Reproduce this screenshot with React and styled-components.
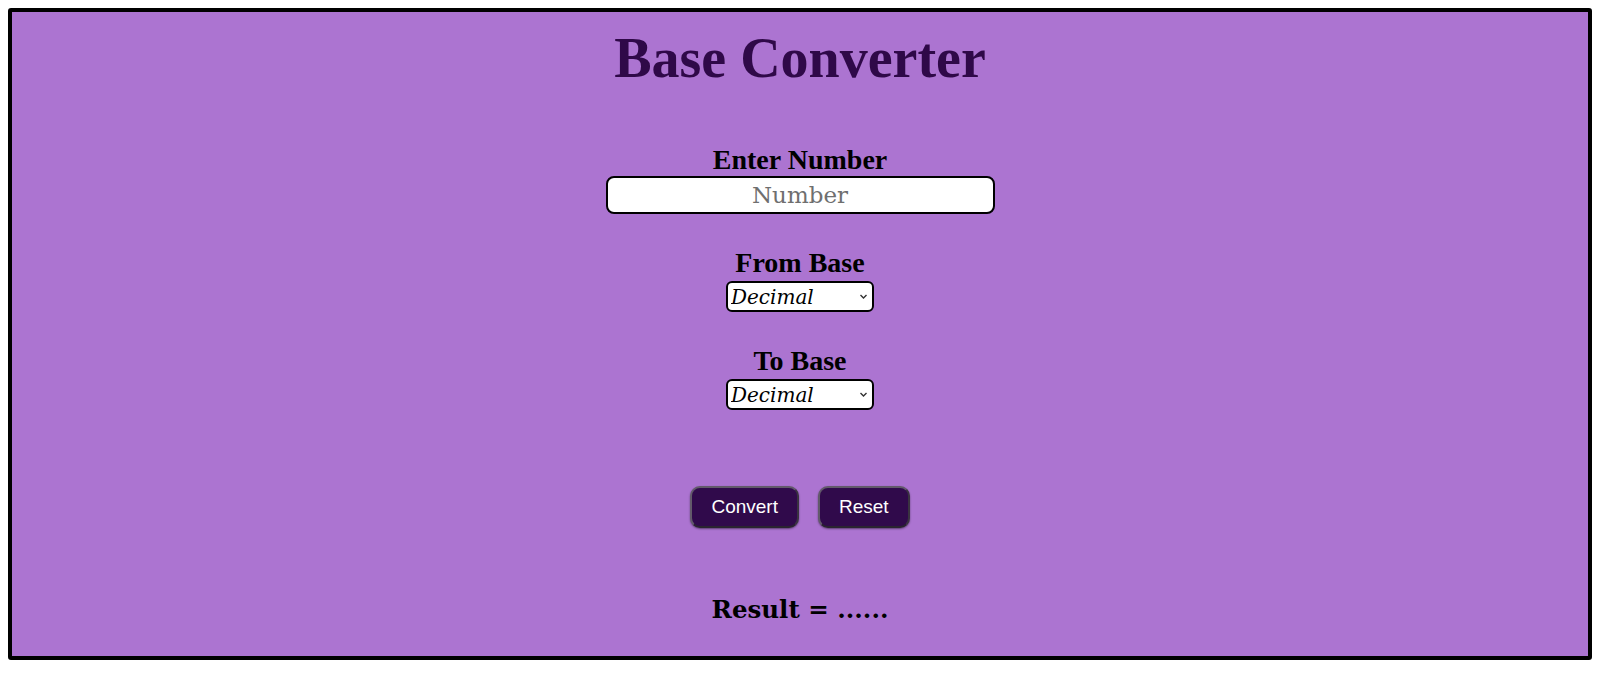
import React from 'react'
import styled, { createGlobalStyle } from 'styled-components'

const GlobalStyle = createGlobalStyle`
  body {
    margin: 8px;
    background: #ffffff;
    font-family: "Liberation Serif", serif;
  }
`

const Container = styled.div`
  box-sizing: border-box;
  height: 652px;
  border: 4px solid #000000;
  border-radius: 3px;
  background-color: #ac74d1;
  display: flex;
  flex-direction: column;
  align-items: center;
`

const Title = styled.h1`
  margin: 15px 0 0;
  font-size: 56px;
  font-weight: bold;
  color: #2f0948;
  line-height: 62px;
`

const Group = styled.div`
  display: flex;
  flex-direction: column;
  align-items: center;
  margin-top: ${(p) => p.$top}px;
`

const Label = styled.label`
  font-size: 28px;
  font-weight: bold;
  color: #000000;
  line-height: 30px;
  margin-bottom: ${(p) => p.$gap || 0}px;
`

const NumberInput = styled.input`
  box-sizing: border-box;
  width: 389px;
  height: 38px;
  border: 2px solid #000000;
  border-radius: 8px;
  background: #ffffff;
  font-family: "DejaVu Serif", serif;
  font-size: 23px;
  text-align: center;
  padding: 0;
  outline: none;
  &::placeholder {
    color: #6f6f6f;
  }
`

const SelectWrap = styled.div`
  position: relative;
  width: 148px;
  height: 31px;
`

const Select = styled.select`
  appearance: none;
  box-sizing: border-box;
  width: 100%;
  height: 100%;
  border: 2px solid #000000;
  border-radius: 6px;
  background: #ffffff;
  font-family: "DejaVu Serif", serif;
  font-style: italic;
  font-size: 20px;
  padding: 0 2px 0 3px;
  color: #000000;
  outline: none;
`

const Chevron = styled.svg`
  position: absolute;
  right: 6px;
  top: 12px;
  width: 9px;
  height: 7px;
  pointer-events: none;
`

const Buttons = styled.div`
  display: flex;
  gap: 19px;
  margin-top: 76px;
`

const Button = styled.button`
  box-sizing: border-box;
  height: 42px;
  padding: 0 19px;
  border: 2px solid #625a6a;
  border-bottom-color: #2a2430;
  border-right-color: #3a3340;
  border-radius: 10px;
  background-color: #300a4b;
  color: #ffffff;
  font-family: "Liberation Sans", Arial, sans-serif;
  font-size: 19px;
  box-shadow: 0 1px 2px rgba(0, 0, 0, 0.45);
  cursor: pointer;
`

const Result = styled.h2`
  margin: 67px 0 0;
  font-family: "DejaVu Serif", serif;
  font-size: 24.5px;
  font-weight: bold;
  color: #000000;
  line-height: 30px;
`

const options = ['Decimal', 'Binary', 'Octal', 'Hexadecimal']

const BaseSelect = () => (
  <SelectWrap>
    <Select defaultValue="Decimal">
      {options.map((o) => (
        <option key={o}>{o}</option>
      ))}
    </Select>
    <Chevron viewBox="0 0 9 7">
      <path d="M1.5 2 L4.5 5 L7.5 2" fill="none" stroke="#333" strokeWidth="1.4" />
    </Chevron>
  </SelectWrap>
)

const App = () => {
  return (
    <>
      <GlobalStyle />
      <Container>
        <Title>Base Converter</Title>
        <Group $top={56}>
          <Label $gap={1}>Enter Number</Label>
          <NumberInput type="text" placeholder="Number" />
        </Group>
        <Group $top={34}>
          <Label $gap={3}>From Base</Label>
          <BaseSelect />
        </Group>
        <Group $top={34}>
          <Label $gap={3}>To Base</Label>
          <BaseSelect />
        </Group>
        <Buttons>
          <Button>Convert</Button>
          <Button>Reset</Button>
        </Buttons>
        <Result>Result = ......</Result>
      </Container>
    </>
  )
}

export default App
